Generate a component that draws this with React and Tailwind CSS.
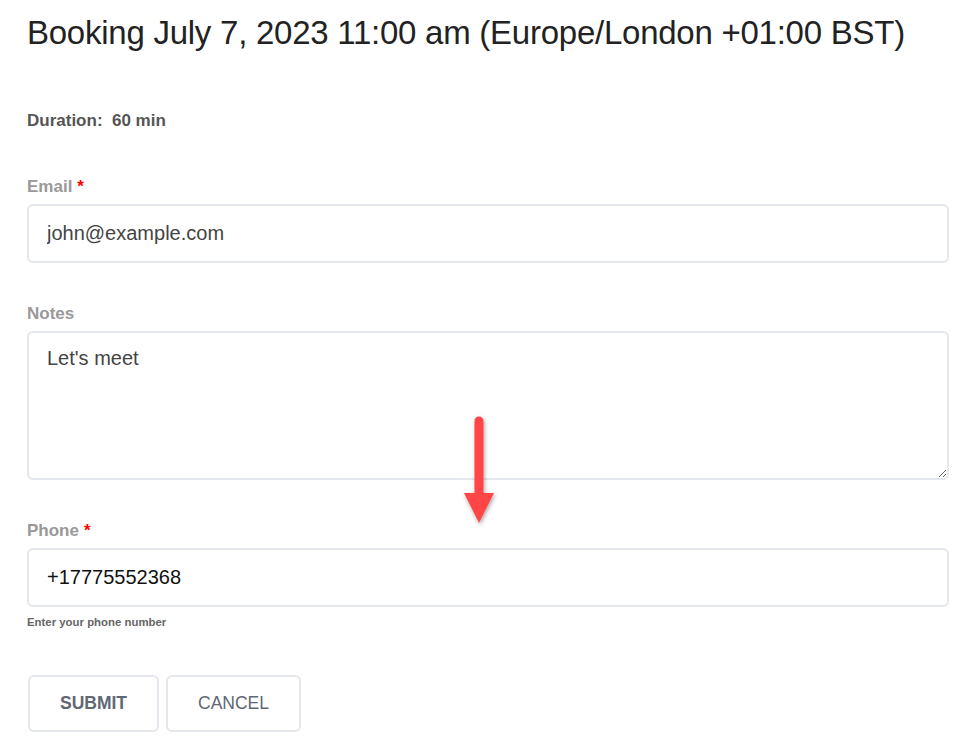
import React from "react";

const Label = ({ children, required }) => (
  <label className="block text-[17px] font-bold text-[#999999] leading-5 mb-[7px]">
    {children}
    {required && <span className="text-[#ff0000] ml-[5px]">*</span>}
  </label>
);

const Arrow = () => (
  <svg
    className="absolute left-[458px] top-[412px] pointer-events-none"
    width="42"
    height="118"
    viewBox="0 0 42 118"
  >
    <defs>
      <filter id="sh" x="-50%" y="-20%" width="200%" height="140%">
        <feDropShadow dx="1" dy="2" stdDeviation="2" floodColor="#000" floodOpacity="0.35" />
      </filter>
    </defs>
    <g filter="url(#sh)">
      <path d="M21 9 L21 84" stroke="#ff4545" strokeWidth="9" strokeLinecap="round" />
      <path d="M6 81 L36 81 L21 111 Z" fill="#ff4545" />
    </g>
  </svg>
);

const App = () => {
  return (
    <div
      className="relative w-[980px] h-[750px] bg-white overflow-hidden"
      style={{ fontFamily: '"Liberation Sans", Arial, sans-serif' }}
    >
      <div className="pl-[27px] pr-[31px] pt-[13px]">
        <h1 className="text-[33px] leading-[39px] text-[#222222] tracking-[-0.25px]">
          Booking July 7, 2023 11:00 am (Europe/London +01:00 BST)
        </h1>

        <p className="mt-[59px] text-[17px] font-bold text-[#555555] leading-5">
          Duration:&nbsp; 60 min
        </p>

        <div className="mt-[46px]">
          <Label required>Email</Label>
          <input
            type="text"
            defaultValue="john@example.com"
            className="block w-full h-[59px] border-2 border-[#e4e7eb] rounded-[6px] px-[18px] text-[20px] text-[#444444] outline-none"
          />
        </div>

        <div className="mt-[41px]">
          <Label>Notes</Label>
          <textarea
            defaultValue="Let's meet"
            className="block w-full h-[149px] border-2 border-[#e4e7eb] rounded-[6px] px-[18px] pt-[10px] text-[20px] text-[#444444] outline-none resize-y"
          />
        </div>

        <div className="mt-[41px]">
          <Label required>Phone</Label>
          <input
            type="text"
            defaultValue="+17775552368"
            className="block w-full h-[59px] border-2 border-[#e4e7eb] rounded-[6px] px-[18px] text-[20px] text-[#111111] outline-none"
          />
          <p className="mt-[8px] text-[11.4px] font-bold text-[#666666] leading-[14px]">
            Enter your phone number
          </p>
        </div>

        <div className="mt-[46px] flex gap-[7px] pl-[1px]">
          <button className="w-[131px] h-[57px] border-2 border-[#e4e7eb] rounded-[6px] text-[17.5px] font-bold text-[#5f6874] bg-white">
            SUBMIT
          </button>
          <button className="w-[135px] h-[57px] border-2 border-[#e4e7eb] rounded-[6px] text-[17.5px] text-[#5f6874] bg-white">
            CANCEL
          </button>
        </div>
      </div>
      <Arrow />
    </div>
  );
};

export default App;
